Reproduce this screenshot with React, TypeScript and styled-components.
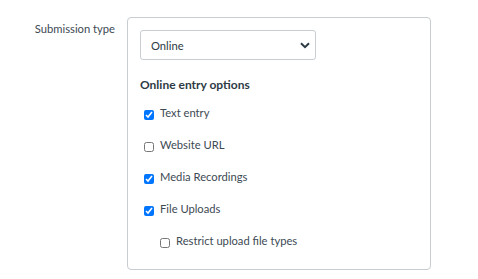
import React from "react";
import styled, { createGlobalStyle } from "styled-components";

const Global = createGlobalStyle`
  html, body { margin: 0; padding: 0; background: #fff; }
  body { font-family: Lato, "Noto Sans", sans-serif; color: #2d3b45; }
`;

const Page = styled.div`
  display: grid;
  grid-template-columns: 115px 304px;
  column-gap: 12px;
  padding-top: 17px;
`;

const FieldLabel = styled.div`
  text-align: right;
  font-size: 11.2px;
  line-height: 18px;
  padding-top: 3px;
  color: #3d4a54;
`;

const Card = styled.div`
  border: 1px solid #c7cdd1;
  border-radius: 4px;
  padding: 12px 12px 19px;
  height: 253px;
  box-sizing: border-box;
`;

const SelectWrap = styled.div`
  position: relative;
  width: 176px;
`;

const Select = styled.select`
  appearance: none;
  -webkit-appearance: none;
  width: 176px;
  height: 30px;
  border: 1px solid #c7cdd1;
  border-radius: 3px;
  background: #fff;
  padding: 0 10px;
  font-family: Lato, "Noto Sans", sans-serif;
  font-size: 11.2px;
  color: #2d3b45;
  display: block;
  outline: none;
`;

const Chevron = styled.svg`
  position: absolute;
  right: 6px;
  top: 12px;
  pointer-events: none;
`;

const Heading = styled.div`
  font-weight: 700;
  font-size: 12px;
  line-height: 18px;
  margin-top: 16px;
  color: #2d3b45;
`;

const OptionList = styled.div`
  display: flex;
  flex-direction: column;
  gap: 14px;
  margin-top: 10px;
`;

const Option = styled.label<{ $indent?: boolean }>`
  display: flex;
  align-items: center;
  gap: 6px;
  padding-left: ${(p) => (p.$indent ? "20px" : "4px")};
  font-size: 11.2px;
  line-height: 18px;
  color: #3d4a54;
`;

const Box = styled.input`
  width: 10px;
  height: 10px;
  margin: 3px 0 0 0;
  accent-color: #0075ff;
  flex: none;
`;

const options: { label: string; checked: boolean; indent?: boolean }[] = [
  { label: "Text entry", checked: true },
  { label: "Website URL", checked: false },
  { label: "Media Recordings", checked: true },
  { label: "File Uploads", checked: true },
  { label: "Restrict upload file types", checked: false, indent: true },
];

export default function App() {
  return (
    <>
      <Global />
      <Page>
        <FieldLabel>Submission type</FieldLabel>
        <Card>
          <SelectWrap>
            <Select defaultValue="online">
              <option value="online">Online</option>
            </Select>
            <Chevron width="10" height="7" viewBox="0 0 10 7">
              <path d="M1 1.2 L5 5.2 L9 1.2" fill="none" stroke="#2d3b45" strokeWidth="2" />
            </Chevron>
          </SelectWrap>
          <Heading>Online entry options</Heading>
          <OptionList>
            {options.map((o) => (
              <Option key={o.label} $indent={o.indent}>
                <Box type="checkbox" defaultChecked={o.checked} />
                <span>{o.label}</span>
              </Option>
            ))}
          </OptionList>
        </Card>
      </Page>
    </>
  );
}
